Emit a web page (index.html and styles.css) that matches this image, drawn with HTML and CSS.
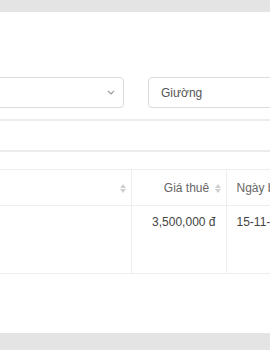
FILE: index.html
```html
<!DOCTYPE html>
<html lang="vi">

<head>
    <meta charset="UTF-8">
    <meta name="viewport" content="width=device-width, initial-scale=1.0">
    <title>Danh sách phòng</title>
    <link rel="stylesheet" href="styles.css">
</head>

<body>
    <div class="topbar"></div>
    <div class="panel">
        <div class="filters">
            <div class="select">
                <span class="select-value"></span>
                <svg class="chevron" width="8" height="5" viewBox="0 0 8 5">
                    <path d="M1 1 L4 4 L7 1" fill="none" stroke="#9a9a9a" stroke-width="1.1" />
                </svg>
            </div>
            <div class="input">Giường</div>
        </div>
        <div class="divider"></div>
        <div class="tabs"></div>

        <table class="rooms">
            <colgroup>
                <col class="w-name">
                <col class="w-price">
                <col class="w-date">
            </colgroup>
            <thead>
                <tr>
                    <th class="col-name">
                        <span class="sorter"><i class="up"></i><i class="down"></i></span>
                    </th>
                    <th class="col-price">Giá thuê <span class="sorter"><i class="up"></i><i class="down"></i></span></th>
                    <th class="col-date">Ngày bắt đầu</th>
                </tr>
            </thead>
            <tbody>
                <tr>
                    <td class="col-name"></td>
                    <td class="col-price">3,500,000 đ</td>
                    <td class="col-date">15-11-2023</td>
                </tr>
            </tbody>
        </table>
    </div>
    <div class="bottombar"></div>
</body>

</html>
```

FILE: styles.css
```css
body {
    margin: 0;
    background-color: #e4e4e4;
    font-family: "Liberation Sans", Arial, sans-serif;
    font-size: 12px;
    color: #555;
    overflow: hidden;
}

.topbar {
    height: 12px;
}

.panel {
    background-color: #fff;
    height: 321px;
    padding-top: 65px;
    box-sizing: border-box;
    overflow: hidden;
}

.filters {
    display: flex;
    gap: 24px;
    margin-left: -60px;
    width: 500px;
}

.select,
.input {
    height: 31px;
    box-sizing: border-box;
    border: 1px solid #dcdcdc;
    border-radius: 4px;
    display: flex;
    align-items: center;
    padding: 0 12px;
}

.select {
    width: 184px;
    justify-content: flex-end;
    padding-right: 8px;
}

.input {
    width: 220px;
    color: #555;
}

.divider {
    margin-top: 11px;
    border-top: 2px solid #ececec;
}

.tabs {
    margin-top: 29px;
    border-top: 2px solid #ececec;
}

.rooms {
    margin-top: 17px;
    margin-left: -60px;
    border-collapse: collapse;
    table-layout: fixed;
    width: 460px;
}

.w-name {
    width: 191px;
}

.w-price {
    width: 95px;
}

.w-date {
    width: 174px;
}

.rooms th,
.rooms td {
    box-sizing: border-box;
    border: 1px solid #ededf2;
    text-align: right;
}

.rooms th {
    height: 36px;
    padding: 0 5px 0 10px;
    font-weight: normal;
    color: #666;
    white-space: nowrap;
}

.rooms td {
    height: 68px;
    vertical-align: top;
    padding: 9px 10px 0;
    color: #444;
}

.rooms .col-name {
    border-left: none;
}

.rooms .col-date {
    text-align: left;
    padding-left: 10px;
}

.sorter {
    display: inline-flex;
    flex-direction: column;
    gap: 1px;
    vertical-align: middle;
    margin-left: 2px;
}

.sorter i {
    width: 0;
    height: 0;
    border-left: 3.5px solid transparent;
    border-right: 3.5px solid transparent;
}

.sorter .up {
    border-bottom: 4px solid #cfcfcf;
}

.sorter .down {
    border-top: 4px solid #cfcfcf;
}

.bottombar {
    height: 17px;
}
```
